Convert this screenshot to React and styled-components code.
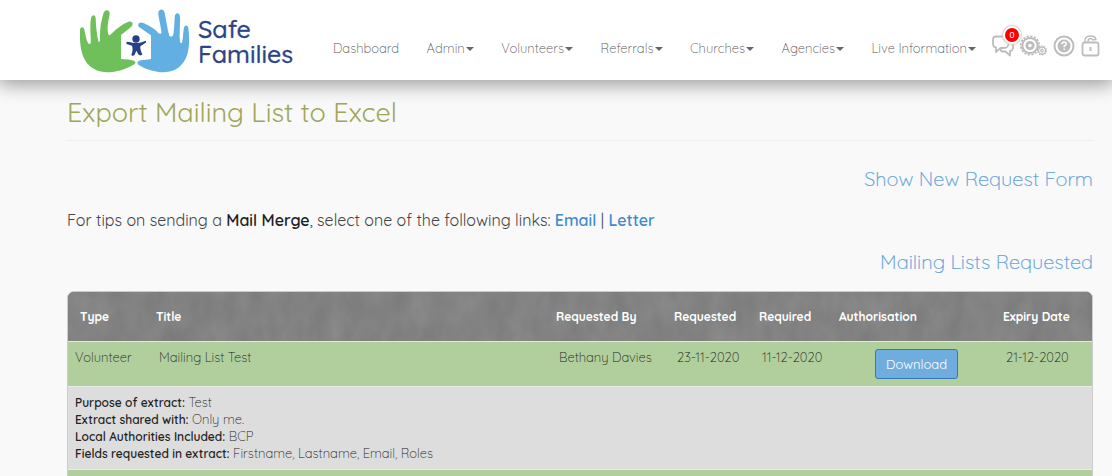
import React from "react";
import styled, { createGlobalStyle } from "styled-components";

const GlobalStyle = createGlobalStyle`
  *, *::before, *::after { box-sizing: border-box; }
  body {
    margin: 0;
    background: #f9f9f9;
    color: #333;
    font-family: Quicksand, Lato, "Liberation Sans", sans-serif;
    font-size: 13px;
    font-weight: 300;
    line-height: 17px;
  }
`;

const Header = styled.header`
  position: relative;
  display: flex;
  align-items: center;
  height: 80px;
  padding: 0 12px 0 80px;
  background: #fff;
  box-shadow: 0 2px 18px 2px rgba(0, 0, 0, 0.4);
`;

const Brand = styled.a`
  display: flex;
  align-items: center;
  gap: 8px;
  width: 253px;
  flex-shrink: 0;
  padding-top: 1px;
  color: #2d4387;
  text-decoration: none;
`;

const BrandName = styled.span`
  display: flex;
  flex-direction: column;
  font-size: 25px;
  font-weight: 500;
  line-height: 25px;
  -webkit-text-stroke: 0.3px currentColor;
`;

const Nav = styled.nav`
  display: flex;
  flex: 1;
  align-items: center;
  justify-content: space-between;
  padding-top: 17px;
`;

const NavLink = styled.a`
  display: flex;
  align-items: center;
  gap: 1px;
  color: #555;
  text-decoration: none;
  white-space: nowrap;
`;

const Caret = styled.span`
  border-top: 4px solid #666;
  border-left: 4px solid transparent;
  border-right: 4px solid transparent;
`;

const Tools = styled.div`
  display: flex;
  align-items: center;
  gap: 6px;
  padding: 12px 0 0 16px;
`;

const ToolButton = styled.button`
  position: relative;
  display: flex;
  padding: 0;
  border: 0;
  background: none;
  color: #bdbdbd;
  cursor: pointer;
`;

const Badge = styled.span`
  position: absolute;
  top: -9px;
  right: -7px;
  width: 18px;
  height: 18px;
  border: 2px solid #fff;
  border-radius: 50%;
  background: #f00;
  box-shadow: 0 0 2px 1px #ccc;
  color: #fff;
  font-size: 9px;
  font-weight: 500;
  line-height: 14px;
  text-align: center;
`;

const Main = styled.main`
  display: flex;
  flex-direction: column;
  gap: 17px;
  padding: 16px 19px 0 67px;
`;

const PageTitle = styled.h1`
  margin: 0 0 9px;
  padding-bottom: 12px;
  border-bottom: 1px solid #eee;
  color: #a0a75a;
  font-size: 27px;
  font-weight: 400;
  line-height: 32px;
`;

const SectionTitle = styled.h2`
  margin: 0;
  color: #62a4dc;
  font-size: 20px;
  font-weight: 300;
  line-height: 24px;
  text-align: right;
  -webkit-text-stroke: 0.2px currentColor;
`;

const SectionLink = styled.a`
  color: inherit;
  text-decoration: none;
`;

const Tips = styled.p`
  margin: 0;
  color: #444;
  font-size: 16px;
  font-weight: 400;
  line-height: 25px;
`;

const Strong = styled.strong`
  color: #222;
  font-weight: 600;
`;

const TipLink = styled.a`
  color: #428bca;
  font-weight: 600;
  text-decoration: none;
`;

const Panel = styled.section`
  position: relative;
  overflow: hidden;
  border: 1px solid #ccc;
  border-radius: 7px 7px 0 0;
  background: #808080;
`;

const Texture = styled.svg`
  position: absolute;
  top: 0;
  left: 0;
  width: 100%;
  height: 49px;
`;

const Table = styled.table`
  position: relative;
  width: 100%;
  table-layout: fixed;
  border-collapse: separate;
  border-spacing: 0;
`;

const Col = styled.col`
  width: ${(p) => p.$width || "auto"};
`;

const Th = styled.th`
  height: 50px;
  padding: 0 0 0 12px;
  border-bottom: 1px solid #e4e8e0;
  color: #fff;
  font-size: 12px;
  font-weight: 700;
  text-align: left;
  white-space: nowrap;
`;

const Row = styled.tr`
  height: 45px;
  background: ${(p) => (p.$detail ? "#ddd" : "#b0cf9c")};
`;

const Td = styled.td`
  padding: 7px 0 7px ${(p) => (p.$first ? "7px" : "15px")};
  border-bottom: 1px solid #e8ebe5;
  color: #222;
  text-align: ${(p) => (p.$center ? "center" : "left")};
  vertical-align: top;
`;

const DetailLabel = styled.strong`
  font-size: 12px;
  font-weight: 600;
`;

const DownloadButton = styled.button`
  display: block;
  width: 83px;
  height: 30px;
  margin: 0 auto;
  padding: 0;
  border: 1px solid #337ab7;
  border-radius: 3px;
  background: #70addf;
  color: #fff;
  font-family: inherit;
  font-size: 13px;
  font-weight: 400;
  cursor: pointer;
`;

const HandsLogo = () => (
  <svg width="110" height="64" viewBox="30 26 330 192" aria-hidden="true">
    <path
      fill="#6fc05b"
      d="M30 90C30 78 41 78 43 88C46 104 50 122 56 130C62 134 63 126 62 112C61 90 60 70 63 54C65 42 76 42 77 53C78 78 80 104 86 125C88 126 90 122 90 116C89 88 93 62 100 40C104 25 121 28 119 42C114 66 110 84 115 102C117 106 121 105 126 99C142 83 158 71 174 65C188 59 192 73 183 80L153 104V176C168 178 182 177 192 181C199 185 197 191 189 194C170 206 140 216 110 216C72 215 45 192 36 158C30 136 29 112 30 90Z"
    />
    <path
      fill="#62afe1"
      d="M206 79C201 70 210 63 222 69C241 78 256 87 265 98C271 103 275 100 274 94C272 78 267 58 265 42C263 25 281 22 284 38C289 62 292 86 298 106C302 111 308 109 310 103C313 86 313 66 314 50C315 36 330 35 330 50C331 76 327 100 330 123C332 132 336 130 337 123C340 110 339 94 342 82C345 73 354 74 355 83C358 108 359 136 352 162C342 196 316 215 282 216C249 215 222 204 205 193C200 187 203 182 212 180C222 178 234 179 243 176V105Z"
    />
    <circle cx="198" cy="116" r="11" fill="#273f86" />
    <path
      fill="#273f86"
      d="M170 124C178 124 186 127 193 128H203C212 128 219 124 227 121L229 126C223 131 217 133 211 138C210 146 213 154 217 162C214 167 208 166 205 162L199 151L194 163C191 168 185 167 184 163C188 154 189 145 186 136C180 134 174 133 169 131Z"
    />
  </svg>
);

const ChatIcon = () => (
  <svg width="22" height="22" viewBox="0 0 22 22" fill="none" stroke="currentColor" strokeWidth="1.8" strokeLinejoin="round">
    <path d="M14 1.5H4Q1 1.5 1 4.5V9Q1 12 4 12.5V17L8.5 13H12Q16 13 16.500 9" />
    <path d="M18.5 6Q21 6.500 21 9V13Q21 15.500 18 16V20.500L13.500 16.500H10.500Q9 16.500 8.500 14" />
  </svg>
);

const GearsIcon = () => (
  <svg width="27" height="22" viewBox="0 0 27 22" fill="none" stroke="currentColor">
    <circle cx="10" cy="10.5" r="7.6" strokeWidth="2" />
    <circle cx="10" cy="10.5" r="9.2" strokeWidth="1.8" strokeDasharray="2.2 1.41" />
    <circle cx="10" cy="10.5" r="3.2" strokeWidth="2.8" />
    <circle cx="22" cy="15.5" r="3.5" strokeWidth="1.3" />
    <circle cx="22" cy="15.5" r="4.5" strokeWidth="1.2" strokeDasharray="1.5 1.3" />
    <circle cx="22" cy="15.5" r="1.3" strokeWidth="1.2" />
  </svg>
);

const HelpIcon = () => (
  <svg width="22" height="22" viewBox="0 0 22 22" fill="none" stroke="currentColor">
    <circle cx="11" cy="11" r="9.5" strokeWidth="2" />
    <circle cx="11" cy="11" r="6.5" fill="currentColor" stroke="none" />
    <path d="M8.8 9.2Q9 7 11.2 7Q13.5 7.200 13.200 9Q13 10 11.200 11V12.300M11.200 13.500V15" stroke="#fff" strokeWidth="1.5" />
  </svg>
);

const LockIcon = () => (
  <svg width="19" height="22" viewBox="0 0 19 22" fill="none" stroke="currentColor" strokeWidth="1.8" strokeLinejoin="round">
    <rect x="1.5" y="7.5" width="16" height="13" rx="2" />
    <path d="M4 7.500V5Q4.500 1 9.500 1Q14.500 1 15 4.500L12 5Q11.500 3.500 9.500 3.500Q7 3.500 7 7" strokeWidth="1.4" />
    <path d="M9.5 12V16" strokeWidth="2" />
  </svg>
);

const menu = ["Admin", "Volunteers", "Referrals", "Churches", "Agencies", "Live Information"];

const columns = [
  ["Type", "76px"],
  ["Title"],
  ["Requested By", "118px"],
  ["Requested", "85px"],
  ["Required", "80px"],
  ["Authorisation", "164px"],
  ["Expiry Date", "101px"],
];

const details = [
  ["Purpose of extract:", "Test"],
  ["Extract shared with:", "Only me."],
  ["Local Authorities Included:", "BCP"],
  ["Fields requested in extract:", "Firstname, Lastname, Email, Roles"],
];

export default function App() {
  return (
    <>
      <GlobalStyle />
      <Header>
        <Brand href="#">
          <HandsLogo />
          <BrandName>
            <span>Safe</span>
            <span>Families</span>
          </BrandName>
        </Brand>
        <Nav>
          <NavLink href="#">Dashboard</NavLink>
          {menu.map((label) => (
            <NavLink href="#" key={label}>
              {label}
              <Caret />
            </NavLink>
          ))}
        </Nav>
        <Tools>
          <ToolButton aria-label="Messages">
            <ChatIcon />
            <Badge>0</Badge>
          </ToolButton>
          <ToolButton aria-label="Settings">
            <GearsIcon />
          </ToolButton>
          <ToolButton aria-label="Help">
            <HelpIcon />
          </ToolButton>
          <ToolButton aria-label="Log out">
            <LockIcon />
          </ToolButton>
        </Tools>
      </Header>
      <Main>
        <PageTitle>Export Mailing List to Excel</PageTitle>
        <SectionTitle>
          <SectionLink href="#">Show New Request Form</SectionLink>
        </SectionTitle>
        <Tips>
          For tips on sending a <Strong>Mail Merge</Strong>, select one of the following links:{" "}
          <TipLink href="#">Email</TipLink> | <TipLink href="#">Letter</TipLink>
        </Tips>
        <SectionTitle>Mailing Lists Requested</SectionTitle>
        <Panel>
          <Texture aria-hidden="true">
            <filter id="slate" x="0" y="0" width="100%" height="100%" colorInterpolationFilters="sRGB">
              <feTurbulence type="fractalNoise" baseFrequency="0.05 0.03" numOctaves="4" seed="8" />
              <feColorMatrix values="0.08 0 0 0 0.47 0.08 0 0 0 0.47 0.08 0 0 0 0.47 0 0 0 0 1" />
            </filter>
            <rect width="100%" height="100%" filter="url(#slate)" />
          </Texture>
          <Table>
            <colgroup>
              {columns.map(([name, width]) => (
                <Col key={name} $width={width} />
              ))}
            </colgroup>
            <thead>
              <tr>
                {columns.map(([name]) => (
                  <Th key={name} scope="col">
                    {name}
                  </Th>
                ))}
              </tr>
            </thead>
            <tbody>
              <Row>
                <Td $first>Volunteer</Td>
                <Td>Mailing List Test</Td>
                <Td>Bethany Davies</Td>
                <Td>23-11-2020</Td>
                <Td>11-12-2020</Td>
                <Td $center>
                  <DownloadButton>Download</DownloadButton>
                </Td>
                <Td>21-12-2020</Td>
              </Row>
              <Row $detail>
                <Td $first colSpan={7}>
                  {details.map(([label, value]) => (
                    <div key={label}>
                      <DetailLabel>{label}</DetailLabel> {value}
                    </div>
                  ))}
                </Td>
              </Row>
              <Row>
                <Td colSpan={7} />
              </Row>
            </tbody>
          </Table>
        </Panel>
      </Main>
    </>
  );
}
